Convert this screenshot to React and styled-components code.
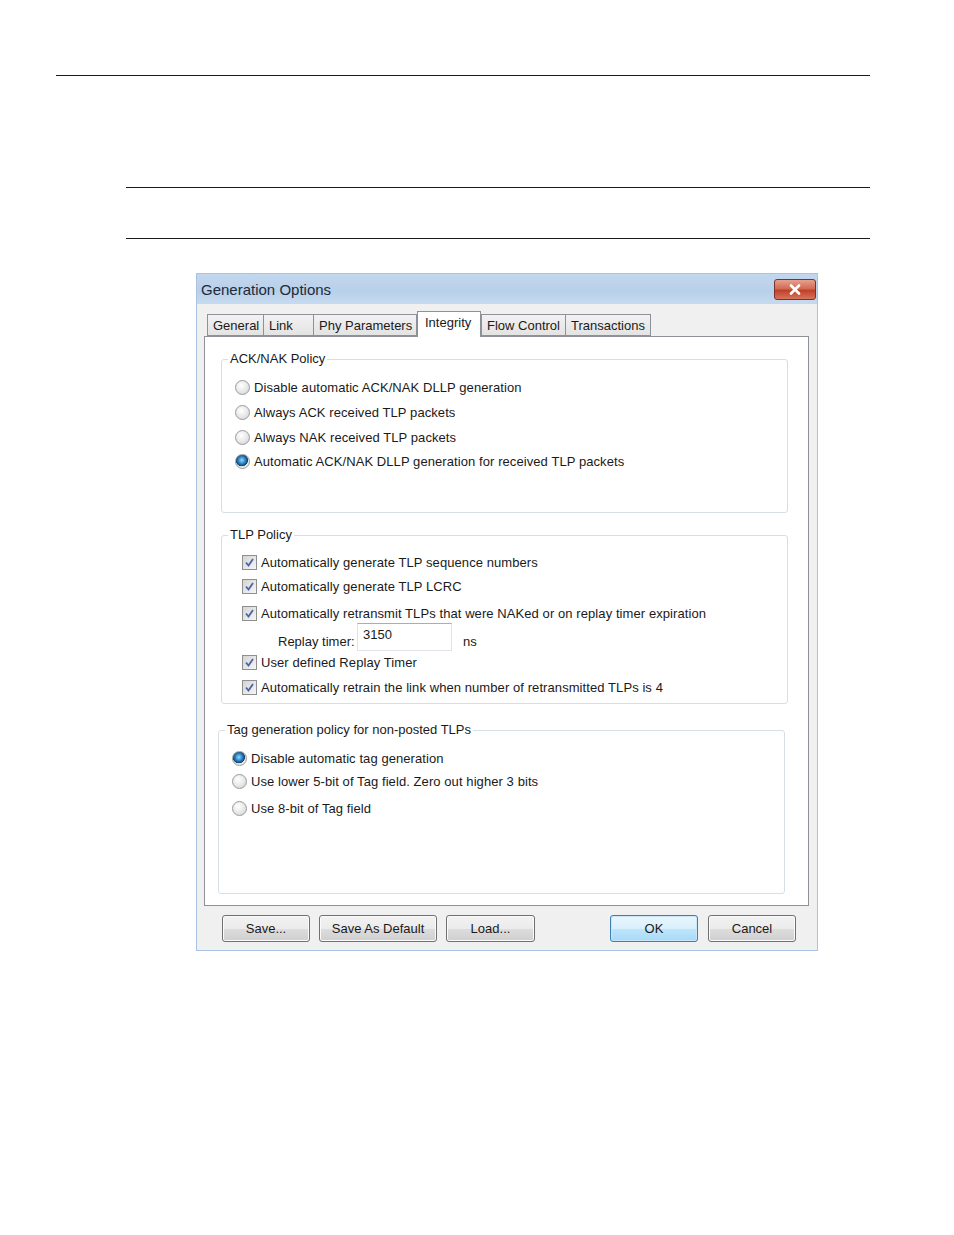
import styled, { createGlobalStyle } from "styled-components";

const Global = createGlobalStyle`
  body {
    margin: 0;
    background: #ffffff;
    font-family: "Liberation Sans", Arial, sans-serif;
  }
`;

const Page = styled.div`
  width: 954px;
  height: 1235px;
  padding-top: 75px;
  box-sizing: border-box;
`;

const Rule = styled.div`
  height: 1px;
  background: #1a1a1a;
  margin-left: ${(p) => p.$left}px;
  margin-top: ${(p) => p.$top || 0}px;
  width: ${(p) => 870 - p.$left}px;
`;

const Dialog = styled.div`
  margin: 34px 0 0 196px;
  width: 622px;
  height: 678px;
  box-sizing: border-box;
  border: 1px solid #aac3e0;
  background: #f0f0f0;
  display: flex;
  flex-direction: column;
`;

const TitleBar = styled.div`
  height: 29px;
  display: flex;
  align-items: center;
  justify-content: space-between;
  padding: 0 1px 0 4px;
  background: linear-gradient(#c2d7ee, #b8d0ea 60%, #c6daef);
  border-bottom: 1px solid #c8d8ea;
`;

const Title = styled.span`
  font-size: 15px;
  color: #1e2a3a;
  margin-top: 2px;
`;

const CloseButton = styled.div`
  width: 40px;
  height: 19px;
  margin-top: 2px;
  border: 1px solid #7a3328;
  border-radius: 3px;
  background: linear-gradient(#e7a08f, #d26b54 45%, #c0412a 55%, #d8735b);
  display: flex;
  align-items: center;
  justify-content: center;
`;

const Body = styled.div`
  padding: 7px 0 0 7px;
  display: flex;
  flex-direction: column;
`;

const TabStrip = styled.div`
  display: flex;
  align-items: flex-end;
  height: 25px;
  padding-left: 3px;
  position: relative;
  z-index: 1;
`;

const Tab = styled.div`
  width: ${(p) => p.$w}px;
  height: ${(p) => (p.$active ? 26 : 22)}px;
  box-sizing: border-box;
  margin: 0 0 ${(p) => (p.$active ? -1 : 0)}px ${(p) => p.$ml || 0}px;
  border: 1px solid #8e9198;
  border-bottom: ${(p) => (p.$active ? "none" : "1px solid #8e9198")};
  background: ${(p) => (p.$active ? "#ffffff" : "linear-gradient(#f2f2f2, #e3e3e3)")};
  font-size: 13px;
  color: #1a1a1a;
  padding: ${(p) => (p.$active ? "3px 0 0 7px" : "3px 0 0 5px")};
  white-space: nowrap;
`;

const Panel = styled.div`
  width: 605px;
  height: 570px;
  box-sizing: border-box;
  border: 1px solid #8e9198;
  background: #ffffff;
  padding-top: 14px;
`;

const Group = styled.fieldset`
  margin: ${(p) => p.$mt || 0}px 0 0 ${(p) => p.$ml}px;
  width: 567px;
  box-sizing: border-box;
  border: 1px solid #d5dfe5;
  border-radius: 3px;
  padding: ${(p) => p.$pt}px 0 ${(p) => p.$pb}px ${(p) => p.$pl}px;
  min-width: 0;
`;

const Legend = styled.legend`
  font-size: 13px;
  line-height: 16px;
  color: #1a1a1a;
  margin-left: ${(p) => p.$ml}px;
  padding: 0 2px;
`;

const Row = styled.div`
  display: flex;
  align-items: center;
  height: 20px;
  margin-top: ${(p) => p.$mt || 0}px;
  font-size: 13px;
  letter-spacing: 0.08px;
  color: #1a1a1a;
  gap: 4px;
  white-space: nowrap;
`;

const RadioDot = styled.span`
  width: 13px;
  height: 13px;
  border-radius: 50%;
  border: 1px solid #9a9a9a;
  background: ${(p) =>
    p.$on
      ? "radial-gradient(circle at 45% 40%, #9fd7f7 0, #2f8ed0 30%, #10426f 55%, #e6e6e6 60%, #f4f4f4 100%)"
      : "radial-gradient(circle at 40% 35%, #ffffff 0, #e9e9e9 50%, #cfcfcf 100%)"};
  flex-shrink: 0;
`;

const CheckBox = styled.span`
  width: 13px;
  height: 13px;
  border: 1px solid #8f8f8f;
  background: linear-gradient(135deg, #d4d4d4, #f6f6f6);
  display: flex;
  align-items: center;
  justify-content: center;
  flex-shrink: 0;
`;

const TimerRow = styled.div`
  display: flex;
  align-items: flex-end;
  height: 28px;
  font-size: 13px;
  color: #1a1a1a;
  padding-left: 36px;
`;

const TimerLabel = styled.span`
  line-height: 18px;
  width: 79px;
`;

const TimerInput = styled.div`
  width: 95px;
  height: 28px;
  box-sizing: border-box;
  border: 1px solid #e2e3ea;
  border-top-color: #abadb3;
  padding: 3px 0 0 5px;
  font-size: 13px;
`;

const Unit = styled.span`
  line-height: 18px;
  margin-left: 11px;
`;

const ButtonBar = styled.div`
  display: flex;
  justify-content: space-between;
  margin-top: 9px;
  padding: 0 21px 0 18px;
`;

const ButtonGroup = styled.div`
  display: flex;
  gap: ${(p) => p.$gap}px;
`;

const Button = styled.div`
  width: ${(p) => p.$w}px;
  height: 27px;
  box-sizing: border-box;
  border: 1px solid ${(p) => (p.$primary ? "#3c7fb1" : "#707070")};
  border-radius: 3px;
  background: ${(p) =>
    p.$primary
      ? "linear-gradient(#eaf6fd, #d9f0fc 50%, #bee6fd 51%, #a7d9f5)"
      : "linear-gradient(#f2f2f2, #ebebeb 50%, #dddddd 51%, #cfcfcf)"};
  box-shadow: inset 0 0 0 1px ${(p) => (p.$primary ? "#c9e7f9" : "#fbfbfb")};
  display: flex;
  align-items: center;
  justify-content: center;
  font-size: 13px;
  color: #1a1a1a;
`;

const Check = () => (
  <svg width="11" height="11" viewBox="0 0 11 11">
    <path d="M2 5.5 L4.5 8.5 L9 2" fill="none" stroke="#4a64a6" strokeWidth="1.8" />
  </svg>
);

const tabs = [
  { name: "General", w: 57, ml: 0 },
  { name: "Link", w: 51, ml: -1 },
  { name: "Phy Parameters", w: 104, ml: -1 },
  { name: "Integrity", w: 64, ml: 0, active: true },
  { name: "Flow Control", w: 85, ml: 0 },
  { name: "Transactions", w: 86, ml: -1 },
];

export default function App() {
  return (
    <Page>
      <Global />
      <Rule $left={56} />
      <Rule $left={126} $top={111} />
      <Rule $left={126} $top={50} />
      <Dialog>
        <TitleBar>
          <Title>Generation Options</Title>
          <CloseButton>
            <svg width="14" height="11" viewBox="0 0 14 11">
              <path d="M3 1.5 L11 9.5 M11 1.5 L3 9.5" stroke="#ffffff" strokeWidth="2.6" strokeLinecap="round" />
            </svg>
          </CloseButton>
        </TitleBar>
        <Body>
          <TabStrip>
            {tabs.map((t) => (
              <Tab key={t.name} $w={t.w} $ml={t.ml} $active={t.active}>
                {t.name}
              </Tab>
            ))}
          </TabStrip>
          <Panel>
            <Group $ml={16} $pt={10} $pb={41} $pl={13}>
              <Legend $ml={-7}>ACK/NAK Policy</Legend>
              <Row>
                <RadioDot />
                Disable automatic ACK/NAK DLLP generation
              </Row>
              <Row $mt={5}>
                <RadioDot />
                Always ACK received TLP packets
              </Row>
              <Row $mt={5}>
                <RadioDot />
                Always NAK received TLP packets
              </Row>
              <Row $mt={4}>
                <RadioDot $on />
                Automatic ACK/NAK DLLP generation for received TLP packets
              </Row>
            </Group>
            <Group $ml={16} $mt={14} $pt={9} $pb={6} $pl={20}>
              <Legend $ml={-14}>TLP Policy</Legend>
              <Row>
                <CheckBox>
                  <Check />
                </CheckBox>
                Automatically generate TLP sequence numbers
              </Row>
              <Row $mt={4}>
                <CheckBox>
                  <Check />
                </CheckBox>
                Automatically generate TLP LCRC
              </Row>
              <Row $mt={7}>
                <CheckBox>
                  <Check />
                </CheckBox>
                Automatically retransmit TLPs that were NAKed or on replay timer expiration
              </Row>
              <TimerRow>
                <TimerLabel>Replay timer:</TimerLabel>
                <TimerInput>3150</TimerInput>
                <Unit>ns</Unit>
              </TimerRow>
              <Row $mt={1}>
                <CheckBox>
                  <Check />
                </CheckBox>
                User defined Replay Timer
              </Row>
              <Row $mt={5}>
                <CheckBox>
                  <Check />
                </CheckBox>
                Automatically retrain the link when number of retransmitted TLPs is 4
              </Row>
            </Group>
            <Group $ml={13} $mt={18} $pt={10} $pb={75} $pl={13}>
              <Legend $ml={-7}>Tag generation policy for non-posted TLPs</Legend>
              <Row>
                <RadioDot $on />
                Disable automatic tag generation
              </Row>
              <Row $mt={3}>
                <RadioDot />
                Use lower 5-bit of Tag field. Zero out higher 3 bits
              </Row>
              <Row $mt={7}>
                <RadioDot />
                Use 8-bit of Tag field
              </Row>
            </Group>
          </Panel>
          <ButtonBar>
            <ButtonGroup $gap={9}>
              <Button $w={88}>Save...</Button>
              <Button $w={118}>Save As Default</Button>
              <Button $w={89}>Load...</Button>
            </ButtonGroup>
            <ButtonGroup $gap={10}>
              <Button $w={88} $primary>
                OK
              </Button>
              <Button $w={88}>Cancel</Button>
            </ButtonGroup>
          </ButtonBar>
        </Body>
      </Dialog>
    </Page>
  );
}
